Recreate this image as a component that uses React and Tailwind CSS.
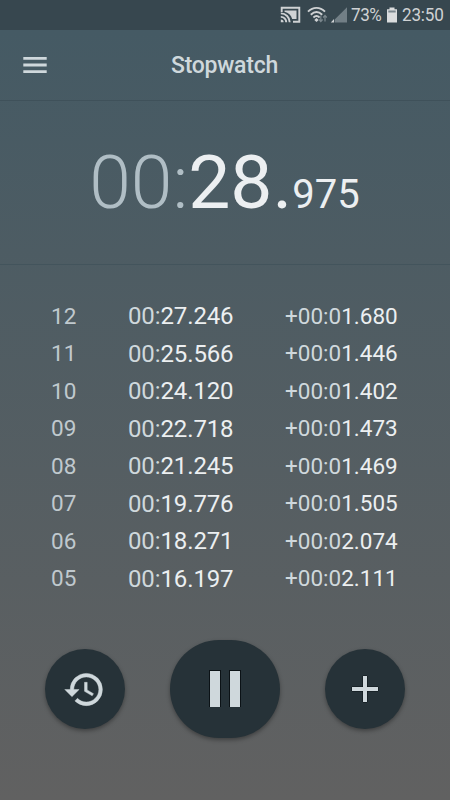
import React from "react";

const laps = [
  { no: "12", time: ["00:", "27.246"], diff: ["+00:0", "1.680"] },
  { no: "11", time: ["00:", "25.566"], diff: ["+00:0", "1.446"] },
  { no: "10", time: ["00:", "24.120"], diff: ["+00:0", "1.402"] },
  { no: "09", time: ["00:", "22.718"], diff: ["+00:0", "1.473"] },
  { no: "08", time: ["00:", "21.245"], diff: ["+00:0", "1.469"] },
  { no: "07", time: ["00:", "19.776"], diff: ["+00:0", "1.505"] },
  { no: "06", time: ["00:", "18.271"], diff: ["+00:0", "2.074"] },
  { no: "05", time: ["00:", "16.197"], diff: ["+00:0", "2.111"] },
];

function StatusBar() {
  return (
    <div className="flex h-[30px] items-center bg-[#37474f] pl-[280px] text-[19px] leading-[30px] text-[#cfd2d4]">
      {/* cast */}
      <svg className="h-[18px] w-[21px] shrink-0" viewBox="0 0 21 18" fill="none" stroke="#cfd2d4" strokeWidth="1.9">
        <path d="M1.7 6V1.8h17.6v13.9h-6.3" />
        <path d="M4.5 4.5h12v8.4h-4.3C11 9 8.5 6.7 4.5 5.7z" fill="#cfd2d4" stroke="none" />
        <path d="M0.8 7.4a8.8 8.8 0 0 1 8.9 8.9M0.8 10.9a5.3 5.3 0 0 1 5.4 5.4" />
        <path d="M0.8 13.5a2.8 2.8 0 0 1 2.8 2.8H0.8z" fill="#cfd2d4" stroke="none" />
      </svg>
      {/* wifi */}
      <svg className="ml-[6px] h-[18px] w-[21px] shrink-0" viewBox="0 0 21 18" fill="none" stroke="#cfd2d4" strokeWidth="1.9">
        <path d="M1 5.7C6 0.6 13 0.6 18 5.7M3.8 8.7C7.5 5.2 11.5 5.2 15.2 8.7M6.4 11.5c2.1-1.9 4.1-1.9 6.2 0" />
        <path d="M9.5 12l2.2 2-2.2 2-2.2-2z" fill="#cfd2d4" stroke="none" />
        <path d="M13.8 9.5v6M12 13.5l1.8 2 1.8-2M18 15.5v-6M16.2 11.5l1.8-2 1.8 2" stroke="#7b878d" strokeWidth="1.2" />
      </svg>
      {/* signal */}
      <svg className="ml-[2px] h-[18px] w-[18px] shrink-0" viewBox="0 0 18 18">
        <path d="M17 1.2v15.3H4.7V13.5z" fill="#727f86" />
        <path d="M4 13v3.5H0.8z" fill="#cfd2d4" />
      </svg>
      <span className="ml-[3px] w-[31px] origin-left scale-x-90 tracking-[-0.5px]">73%</span>
      {/* battery */}
      <svg className="ml-[4px] h-[16px] w-[12px] shrink-0" viewBox="0 0 12 16">
        <path d="M3.5 0.5h5v1.8h2.5v13.2H1V2.3h2.5z" fill="#dadcdd" />
        <path d="M2.3 3.5h7.4v2H2.3z" fill="#7b878d" />
      </svg>
      <span className="ml-[4px] origin-left scale-x-90 tracking-[-0.2px]">23:50</span>
    </div>
  );
}

function Header() {
  return (
    <div className="flex h-[71px] items-center border-b border-[#3f515a] pl-[23px]">
      <svg className="h-[16px] w-6 shrink-0" viewBox="0 0 24 16" fill="#cfd8dc">
        <path d="M0.3 0h23.4v2.8H0.3zM0.3 6.6h23.4v2.8H0.3zM0.3 13.2h23.4V16H0.3z" />
      </svg>
      <h1 className="ml-[124px] pt-[2px] text-[23px] font-medium tracking-[-0.25px] text-[#cfd8dc]">Stopwatch</h1>
    </div>
  );
}

function Timer() {
  return (
    <div className="flex h-[164px] items-baseline justify-center border-b border-[#43545c] pt-[37px] pr-px text-[75px] leading-[88px]">
      <span className="font-light text-[#b0bec5]">00:</span>
      <span className="text-[#eceff1]">28.</span>
      <span className="text-[40px] leading-none text-[#eceff1]">975</span>
    </div>
  );
}

function LapRow({ no, time, diff }) {
  return (
    <div className="flex h-[37.5px] items-center text-[22.5px] text-[#eceff1]">
      <span className="w-[77px] text-[#c0c9ce]">{no}</span>
      <span className="w-[157px] text-[24px] tracking-[-0.12px]">
        <span className="text-[#cfd8dc]">{time[0]}</span>
        {time[1]}
      </span>
      <span>
        <span className="text-[#cfd8dc]">{diff[0]}</span>
        {diff[1]}
      </span>
    </div>
  );
}

function RoundButton({ label, big, children }) {
  return (
    <button
      aria-label={label}
      className={`flex items-center justify-center bg-[#263238] shadow-[0_2px_4px_rgba(0,0,0,0.35)] ${
        big ? "h-[98px] w-[110px] rounded-[50px]" : "h-20 w-20 rounded-full"
      }`}
    >
      {children}
    </button>
  );
}

export default function App() {
  return (
    <div className="flex h-[800px] w-[450px] flex-col overflow-hidden bg-linear-to-b/srgb from-[#455a64] from-[4%] to-[#616161] font-[Roboto,sans-serif]">
      <StatusBar />
      <Header />
      <Timer />
      <div className="flex h-[375px] flex-col pt-[32.7px] pl-[51px]">
        {laps.map((lap) => (
          <LapRow key={lap.no} {...lap} />
        ))}
      </div>
      <div className="flex h-[98px] items-center justify-center gap-[45px]">
        <RoundButton label="Reset">
          <svg className="mr-px h-[43px] w-[43px]" viewBox="0 0 24 24" fill="#cfd8dc" stroke="#cfd8dc" strokeWidth="0.25">
            <path d="M13 3a9 9 0 0 0-9 9H1l3.89 3.89.07.14L9 12H6c0-3.87 3.13-7 7-7s7 3.13 7 7-3.13 7-7 7c-1.93 0-3.68-.79-4.94-2.06l-1.42 1.42A8.954 8.954 0 0 0 13 21a9 9 0 0 0 0-18zm-1 5v5l4.28 2.54.72-1.21-3.5-2.08V8H12z" />
          </svg>
        </RoundButton>
        <RoundButton label="Pause" big>
          <svg className="h-[38px] w-[32px]" viewBox="0 0 32 38">
            <path d="M0 0h12v37H0zM20 0h12v37H20z" fill="#0b1216" />
            <path d="M1 1h10v36H1zM21 1h10v36H21z" fill="#cfd8dc" />
          </svg>
        </RoundButton>
        <RoundButton label="Lap">
          <svg className="h-[28px] w-[28px]" viewBox="0 0 28 28">
            <path d="M12 1h4v11h11v4H16v11h-4V16H1v-4h11z" fill="#cfd8dc" stroke="#0b1216" strokeWidth="1" paintOrder="stroke" />
          </svg>
        </RoundButton>
      </div>
    </div>
  );
}
